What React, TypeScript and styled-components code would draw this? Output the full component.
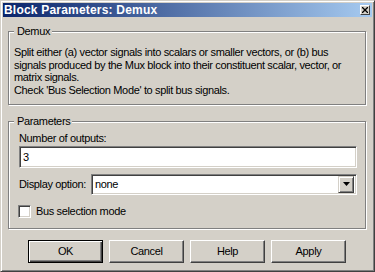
import React from 'react';
import styled, { createGlobalStyle } from 'styled-components';

const COLORS = {
  face: '#D4D0C8',
  shadow: '#808080',
  dark: '#404040',
  light: '#FFFFFF',
};

const GlobalStyle = createGlobalStyle`
  html, body {
    margin: 0;
    padding: 0;
    background: ${COLORS.face};
  }
  body {
    font-family: 'Liberation Sans', Arial, sans-serif;
    font-size: 11px;
    letter-spacing: -0.35px;
    color: #000;
  }
`;

const Window = styled.div`
  width: 375px;
  height: 272px;
  box-sizing: border-box;
  background: ${COLORS.face};
  border: 1px solid;
  border-color: ${COLORS.face} ${COLORS.dark} ${COLORS.dark} ${COLORS.face};
  box-shadow: inset 1px 1px 0 ${COLORS.light}, inset -1px -1px 0 ${COLORS.shadow};
  padding: 2px;
  display: flex;
  flex-direction: column;
`;

const TitleBar = styled.div`
  height: 14px;
  display: flex;
  align-items: center;
  justify-content: space-between;
  padding: 0 2px 0 1px;
  background: linear-gradient(to right, #0a246a, #a6caf0);
  color: #fff;
  font-weight: bold;
  font-size: 12px;
  letter-spacing: 0.2px;
  line-height: 14px;
`;

const CloseButton = styled.div`
  width: 10px;
  height: 10px;
  box-sizing: border-box;
  background: ${COLORS.face};
  border: 1px solid;
  border-color: ${COLORS.light} ${COLORS.dark} ${COLORS.dark} ${COLORS.light};
  display: flex;
  align-items: center;
  justify-content: center;
  svg {
    display: block;
  }
`;

const Body = styled.div`
  flex: 1;
  display: flex;
  flex-direction: column;
  padding: 8px 6px 0 5px;
`;

const GroupBox = styled.fieldset<{ $gap?: number }>`
  margin: ${(p) => p.$gap || 0}px 0 0 0;
  padding: 0;
  min-width: 0;
  border: 1px solid ${COLORS.shadow};
  box-shadow: inset 1px 1px 0 ${COLORS.light}, 1px 1px 0 ${COLORS.light};

  legend {
    margin-left: 5px;
    padding: 0 2px 0 3px;
    line-height: 13px;
    background: ${COLORS.face};
  }
`;

const Description = styled.div`
  padding: 8px 8px 7px 5px;
  line-height: 12.7px;
  white-space: nowrap;
`;

const Params = styled.div`
  padding: 4px 8px 10px 10px;
  display: flex;
  flex-direction: column;
`;

const Label = styled.div`
  line-height: 13px;
  height: 14px;
`;

const sunken = `
  box-sizing: border-box;
  background: #fff;
  border: 1px solid;
  border-color: ${COLORS.shadow} ${COLORS.light} ${COLORS.light} ${COLORS.shadow};
  box-shadow: inset 1px 1px 0 ${COLORS.dark}, inset -1px -1px 0 ${COLORS.face};
`;

const TextField = styled.div`
  ${sunken}
  height: 22px;
  padding: 0 3px;
  display: flex;
  align-items: center;
`;

const Row = styled.div`
  display: flex;
  align-items: center;
  margin-top: 6px;
`;

const SelectBox = styled.div`
  ${sunken}
  flex: 1;
  margin-left: 5px;
  height: 21px;
  padding: 2px 2px 2px 3px;
  display: flex;
  align-items: center;
  justify-content: space-between;
`;

const DropButton = styled.div`
  width: 16px;
  height: 17px;
  box-sizing: border-box;
  background: ${COLORS.face};
  border: 1px solid;
  border-color: ${COLORS.face} ${COLORS.dark} ${COLORS.dark} ${COLORS.face};
  box-shadow: inset 1px 1px 0 ${COLORS.light}, inset -1px -1px 0 ${COLORS.shadow};
  display: flex;
  align-items: center;
  justify-content: center;
`;

const CheckRow = styled.label`
  display: flex;
  align-items: center;
  margin-top: 10px;
  margin-left: -1px;
`;

const CheckBox = styled.span`
  ${sunken}
  width: 13px;
  height: 13px;
  margin-right: 5px;
`;

const ButtonBar = styled.div`
  display: flex;
  justify-content: center;
  gap: 6px;
  margin-top: 11px;
`;

const Button = styled.div<{ $default?: boolean }>`
  width: 75px;
  height: 23px;
  box-sizing: border-box;
  display: flex;
  align-items: center;
  justify-content: center;
  background: ${COLORS.face};
  border: 1px solid;
  border-color: ${(p) =>
    p.$default ? '#000' : `${COLORS.light} ${COLORS.dark} ${COLORS.dark} ${COLORS.light}`};
  box-shadow: ${(p) =>
    p.$default
      ? `inset 1px 1px 0 ${COLORS.light}, inset -1px -1px 0 ${COLORS.dark}, inset -2px -2px 0 ${COLORS.shadow}`
      : `inset -1px -1px 0 ${COLORS.shadow}`};
`;

const App = () => {
  return (
    <>
      <GlobalStyle />
      <Window>
        <TitleBar>
          <span>Block Parameters: Demux</span>
          <CloseButton>
            <svg width="6" height="6" viewBox="0 0 6 6">
              <path d="M0 0L6 6M6 0L0 6" stroke="#000" strokeWidth="1.3" />
            </svg>
          </CloseButton>
        </TitleBar>
        <Body>
          <GroupBox>
            <legend>Demux</legend>
            <Description>
              Split either (a) vector signals into scalars or smaller vectors, or (b) bus
              <br />
              signals produced by the Mux block into their constituent scalar, vector, or
              <br />
              matrix signals.
              <br />
              Check 'Bus Selection Mode' to split bus signals.
            </Description>
          </GroupBox>
          <GroupBox $gap={10}>
            <legend>Parameters</legend>
            <Params>
              <Label>Number of outputs:</Label>
              <TextField>3</TextField>
              <Row>
                <span>Display option:</span>
                <SelectBox>
                  <span>none</span>
                  <DropButton>
                    <svg width="7" height="4" viewBox="0 0 7 4">
                      <path d="M0 0H7L3.5 4Z" fill="#000" />
                    </svg>
                  </DropButton>
                </SelectBox>
              </Row>
              <CheckRow>
                <CheckBox />
                <span>Bus selection mode</span>
              </CheckRow>
            </Params>
          </GroupBox>
          <ButtonBar>
            <Button $default>OK</Button>
            <Button>Cancel</Button>
            <Button>Help</Button>
            <Button>Apply</Button>
          </ButtonBar>
        </Body>
      </Window>
    </>
  );
};

export default App;
